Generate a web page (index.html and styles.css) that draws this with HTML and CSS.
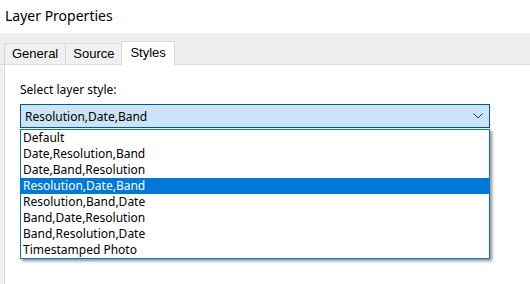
FILE: index.html
```html
<!DOCTYPE html>
<html lang="en">

<head>
  <meta charset="UTF-8">
  <title>Layer Properties</title>
  <link rel="stylesheet" href="styles.css">
</head>

<body>
  <div class="title">Layer Properties</div>

  <div class="tabstrip">
    <div class="tab">General</div>
    <div class="tab">Source</div>
    <div class="tab active">Styles</div>
  </div>

  <div class="panel">
    <div class="label">Select layer style:</div>
    <div class="combo">
      <span>Resolution,Date,Band</span>
      <svg class="chevron" width="10" height="6" viewBox="0 0 10 6">
        <path d="M0.5 0.5 L5 5 L9.5 0.5" fill="none" stroke="#333" stroke-width="1"/>
      </svg>
    </div>
    <ul class="list">
      <li>Default</li>
      <li>Date,Resolution,Band</li>
      <li>Date,Band,Resolution</li>
      <li class="selected">Resolution,Date,Band</li>
      <li>Resolution,Band,Date</li>
      <li>Band,Date,Resolution</li>
      <li>Band,Resolution,Date</li>
      <li>Timestamped Photo</li>
    </ul>
  </div>
</body>

</html>
```

FILE: styles.css
```css
/* dialog frame */
body {
  margin: 0;
  background-color: #f0f0f0;
  font-family: "Noto Sans", "Open Sans", sans-serif;
  font-size: 12px;
  color: #000;
  height: 284px;
  overflow: hidden;
}

.title {
  background-color: #fff;
  height: 33px;
  padding-left: 5px;
  font-size: 14px;
  line-height: 31px;
}

/* tabs */
.tabstrip {
  display: flex;
  align-items: flex-end;
  height: 31px;
  padding-left: 4px;
  background-color: #eeeeee;
  border-bottom: 1px solid #d9d9d9;
  font-family: "Liberation Sans", Arial, sans-serif;
  font-size: 13px;
}

.tab {
  height: 21px;
  line-height: 20px;
  padding: 0 7px;
  background-color: #f0f0f0;
  border: 1px solid #d9d9d9;
  border-bottom: none;
  margin-right: -1px;
  box-sizing: border-box;
}

.tab.active {
  height: 24px;
  margin-bottom: -1px;
  line-height: 22px;
  padding: 0 8px;
  background-color: #fff;
  position: relative;
}

/* styles page */
.panel {
  margin-left: 4px;
  border-left: 1px solid #d9d9d9;
  background-color: #fff;
  height: 219px;
  box-sizing: border-box;
  padding: 17px 0 0 15px;
}

.label {
  height: 22px;
  line-height: 16px;
}

.combo {
  width: 470px;
  height: 24px;
  box-sizing: border-box;
  border: 1px solid #005499;
  background-color: #cce4f7;
  display: flex;
  align-items: center;
  justify-content: space-between;
  padding: 0 6px 0 4px;
}

.chevron {
  display: block;
}

.list {
  list-style: none;
  margin: 1px 0 0;
  padding: 0;
  width: 470px;
  box-sizing: border-box;
  border: 1px solid #0078d7;
  background-color: #fff;
  box-shadow: 2px 2px 3px rgba(0, 0, 0, 0.45);
}

.list li {
  height: 16px;
  line-height: 16px;
  padding-left: 2px;
}

.list li.selected {
  background-color: #0078d7;
  color: #fff;
}
```
